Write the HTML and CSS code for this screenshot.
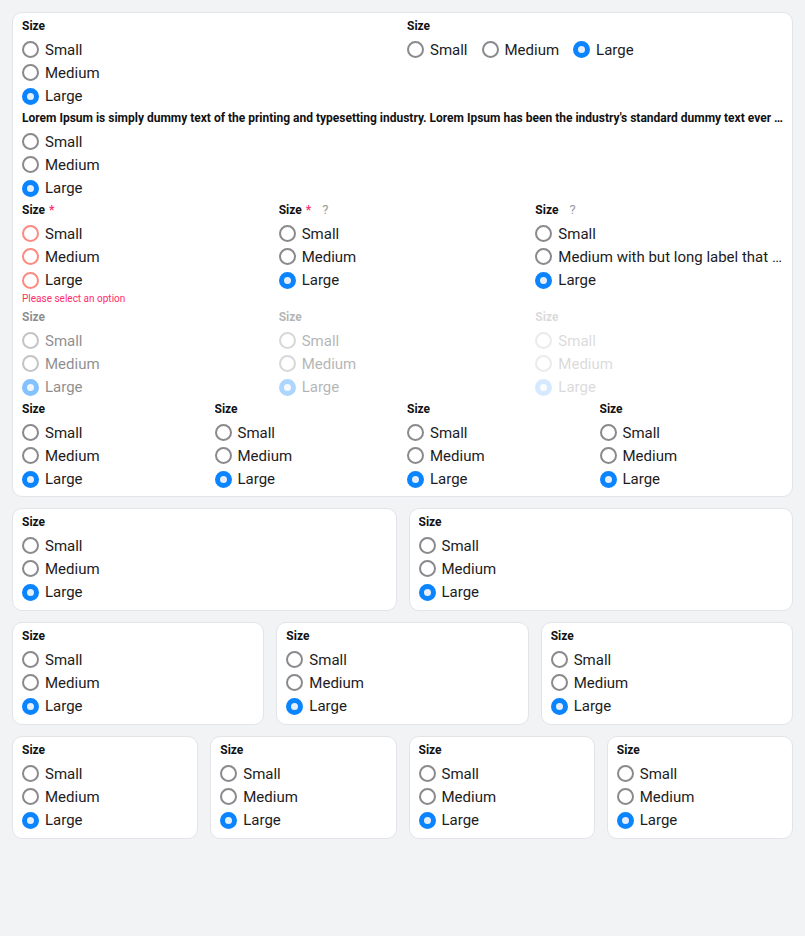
FILE: index.html
```html
<!DOCTYPE html>
<html lang="en">
<head>
  <meta charset="UTF-8" />
  <meta name="viewport" content="width=device-width, initial-scale=1.0"/>
  <title>Radio groups</title>
  <link rel="stylesheet" href="styles.css">
</head>
<body>

  <!-- Tarjeta principal con todas las variantes -->
  <div class="card">
    <div class="grid cols-2">
      <div class="group">
        <div class="label">Size</div>
        <div class="option"><span class="radio"></span>Small</div>
        <div class="option"><span class="radio"></span>Medium</div>
        <div class="option"><span class="radio checked"></span>Large</div>
      </div>
      <div class="group">
        <div class="label">Size</div>
        <div class="inline">
          <div class="option"><span class="radio"></span>Small</div>
          <div class="option"><span class="radio"></span>Medium</div>
          <div class="option"><span class="radio checked"></span>Large</div>
        </div>
      </div>
    </div>

    <div class="group">
      <div class="label">Lorem Ipsum is simply dummy text of the printing and typesetting industry. Lorem Ipsum has been the industry's standard dummy text ever since the 1500s, when an unknown printer took a galley of type.</div>
      <div class="option"><span class="radio"></span>Small</div>
      <div class="option"><span class="radio"></span>Medium</div>
      <div class="option"><span class="radio checked"></span>Large</div>
    </div>

    <div class="grid cols-3">
      <div class="group invalid">
        <div class="label">Size<span class="required">*</span></div>
        <div class="option"><span class="radio"></span>Small</div>
        <div class="option"><span class="radio"></span>Medium</div>
        <div class="option"><span class="radio"></span>Large</div>
        <div class="error">Please select an option</div>
      </div>
      <div class="group">
        <div class="label">Size<span class="required">*</span><span class="help">?</span></div>
        <div class="option"><span class="radio"></span>Small</div>
        <div class="option"><span class="radio"></span>Medium</div>
        <div class="option"><span class="radio checked"></span>Large</div>
      </div>
      <div class="group">
        <div class="label">Size<span class="help">?</span></div>
        <div class="option"><span class="radio"></span>Small</div>
        <div class="option"><span class="radio"></span><span class="text">Medium with but long label that ...</span></div>
        <div class="option"><span class="radio checked"></span>Large</div>
      </div>
    </div>

    <div class="grid cols-3">
      <div class="group disabled d1">
        <div class="label">Size</div>
        <div class="option"><span class="radio"></span>Small</div>
        <div class="option"><span class="radio"></span>Medium</div>
        <div class="option"><span class="radio checked"></span>Large</div>
      </div>
      <div class="group disabled d2">
        <div class="label">Size</div>
        <div class="option"><span class="radio"></span>Small</div>
        <div class="option"><span class="radio"></span>Medium</div>
        <div class="option"><span class="radio checked"></span>Large</div>
      </div>
      <div class="group disabled d3">
        <div class="label">Size</div>
        <div class="option"><span class="radio"></span>Small</div>
        <div class="option"><span class="radio"></span>Medium</div>
        <div class="option"><span class="radio checked"></span>Large</div>
      </div>
    </div>

    <div class="grid cols-4">
      <div class="group">
        <div class="label">Size</div>
        <div class="option"><span class="radio"></span>Small</div>
        <div class="option"><span class="radio"></span>Medium</div>
        <div class="option"><span class="radio checked"></span>Large</div>
      </div>
      <div class="group">
        <div class="label">Size</div>
        <div class="option"><span class="radio"></span>Small</div>
        <div class="option"><span class="radio"></span>Medium</div>
        <div class="option"><span class="radio checked"></span>Large</div>
      </div>
      <div class="group">
        <div class="label">Size</div>
        <div class="option"><span class="radio"></span>Small</div>
        <div class="option"><span class="radio"></span>Medium</div>
        <div class="option"><span class="radio checked"></span>Large</div>
      </div>
      <div class="group">
        <div class="label">Size</div>
        <div class="option"><span class="radio"></span>Small</div>
        <div class="option"><span class="radio"></span>Medium</div>
        <div class="option"><span class="radio checked"></span>Large</div>
      </div>
    </div>
  </div>

  <!-- Tarjetas en dos columnas -->
  <div class="cards cols-2">
    <div class="card">
      <div class="label">Size</div>
      <div class="option"><span class="radio"></span>Small</div>
      <div class="option"><span class="radio"></span>Medium</div>
      <div class="option"><span class="radio checked"></span>Large</div>
    </div>
    <div class="card">
      <div class="label">Size</div>
      <div class="option"><span class="radio"></span>Small</div>
      <div class="option"><span class="radio"></span>Medium</div>
      <div class="option"><span class="radio checked"></span>Large</div>
    </div>
  </div>

  <!-- Tarjetas en tres columnas -->
  <div class="cards cols-3">
    <div class="card">
      <div class="label">Size</div>
      <div class="option"><span class="radio"></span>Small</div>
      <div class="option"><span class="radio"></span>Medium</div>
      <div class="option"><span class="radio checked"></span>Large</div>
    </div>
    <div class="card">
      <div class="label">Size</div>
      <div class="option"><span class="radio"></span>Small</div>
      <div class="option"><span class="radio"></span>Medium</div>
      <div class="option"><span class="radio checked"></span>Large</div>
    </div>
    <div class="card">
      <div class="label">Size</div>
      <div class="option"><span class="radio"></span>Small</div>
      <div class="option"><span class="radio"></span>Medium</div>
      <div class="option"><span class="radio checked"></span>Large</div>
    </div>
  </div>

  <!-- Tarjetas en cuatro columnas -->
  <div class="cards cols-4">
    <div class="card">
      <div class="label">Size</div>
      <div class="option"><span class="radio"></span>Small</div>
      <div class="option"><span class="radio"></span>Medium</div>
      <div class="option"><span class="radio checked"></span>Large</div>
    </div>
    <div class="card">
      <div class="label">Size</div>
      <div class="option"><span class="radio"></span>Small</div>
      <div class="option"><span class="radio"></span>Medium</div>
      <div class="option"><span class="radio checked"></span>Large</div>
    </div>
    <div class="card">
      <div class="label">Size</div>
      <div class="option"><span class="radio"></span>Small</div>
      <div class="option"><span class="radio"></span>Medium</div>
      <div class="option"><span class="radio checked"></span>Large</div>
    </div>
    <div class="card">
      <div class="label">Size</div>
      <div class="option"><span class="radio"></span>Small</div>
      <div class="option"><span class="radio"></span>Medium</div>
      <div class="option"><span class="radio checked"></span>Large</div>
    </div>
  </div>

</body>
</html>
```

FILE: styles.css
```css
body {
  background-color: #f2f3f5;
  color: #1c1c1e;
  font-family: Roboto, 'Liberation Sans', sans-serif;
  margin: 0;
  padding: 12px;
}

/* Tarjeta base */
.card {
  background-color: #fff;
  border: 1px solid #e2e4e8;
  border-radius: 10px;
  padding: 3px 9px 5px;
  min-width: 0;
}

.grid {
  display: grid;
  column-gap: 9px;
}

.cards {
  display: grid;
  column-gap: 12px;
  margin-top: 11px;
}

.cards .card { padding-bottom: 6px; }

.cols-2 { grid-template-columns: repeat(2, minmax(0, 1fr)); }
.cols-3 { grid-template-columns: repeat(3, minmax(0, 1fr)); }
.cols-4 { grid-template-columns: repeat(4, minmax(0, 1fr)); }

.group {
  min-width: 0;
}

.label {
  font-size: 12px;
  font-weight: 700;
  line-height: 20px;
  height: 20px;
  margin-bottom: 2px;
  color: #111;
  white-space: nowrap;
  overflow: hidden;
  text-overflow: ellipsis;
}

.required {
  color: #ff2d6b;
  margin-left: 4px;
}

.help {
  color: #9a9a9e;
  font-weight: 400;
  font-size: 13px;
  margin-left: 11px;
}

.option {
  display: flex;
  align-items: center;
  height: 23.33px;
  font-size: 15px;
  white-space: nowrap;
}

.option .text {
  overflow: hidden;
  text-overflow: ellipsis;
}

.inline {
  display: flex;
  gap: 14px;
}

/* Circulo del radio */
.radio {
  flex: none;
  box-sizing: border-box;
  width: 17px;
  height: 17px;
  border: 2px solid #8a8a8e;
  border-radius: 50%;
  margin-right: 6px;
  background-color: #fff;
}

.radio.checked {
  border: 5px solid #0a84ff;
  background-color: #e6eefa;
}

.invalid .radio {
  border-color: #fb8b80;
}

.error {
  font-size: 10px;
  line-height: 13px;
  color: #ff2d6b;
  margin-bottom: 2px;
}

.disabled .label { color: inherit; }
.d1 { opacity: 0.5; }
.d2 { opacity: 0.33; }
.d3 { opacity: 0.16; }
```
